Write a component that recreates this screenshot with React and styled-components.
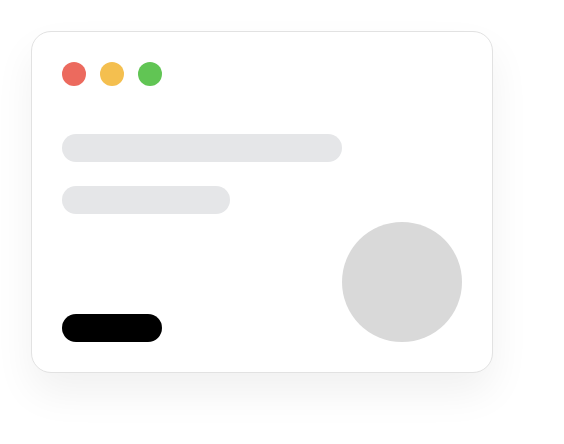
import React from "react";
import styled, { createGlobalStyle } from "styled-components";

const Global = createGlobalStyle`
  html, body { margin: 0; padding: 0; background: #ffffff; }
  body { font-family: "Inter", "Liberation Sans", sans-serif; }
`;

const Page = styled.div`
  padding: 31px 0 0 31px;
  width: 564px;
  height: 444px;
  box-sizing: border-box;
`;

const Card = styled.div`
  width: 462px;
  height: 342px;
  box-sizing: border-box;
  padding: 30px;
  border: 1px solid #e2e2e2;
  border-radius: 20px;
  background: #ffffff;
  box-shadow: 0 20px 40px rgba(0, 0, 0, 0.06);
  display: flex;
  flex-direction: column;
`;

const Dots = styled.div`
  display: flex;
  gap: 14px;
`;

const Dot = styled.span`
  width: 24px;
  height: 24px;
  border-radius: 50%;
  background: ${(p) => p.$color};
`;

const Lines = styled.div`
  margin-top: 48px;
  display: flex;
  flex-direction: column;
  gap: 24px;
`;

const Line = styled.div`
  width: ${(p) => p.$w}px;
  height: 28px;
  border-radius: 14px;
  background: #e5e6e8;
`;

const Bottom = styled.div`
  margin-top: auto;
  display: flex;
  justify-content: space-between;
  align-items: flex-end;
`;

const Pill = styled.div`
  width: 100px;
  height: 28px;
  border-radius: 14px;
  background: #000000;
`;

const Avatar = styled.div`
  width: 120px;
  height: 120px;
  border-radius: 50%;
  background: #d9d9d9;
`;

export default function App() {
  return (
    <>
      <Global />
      <Page>
        <Card>
          <Dots>
            <Dot $color="#ec6a5e" />
            <Dot $color="#f4bf4f" />
            <Dot $color="#61c554" />
          </Dots>
          <Lines>
            <Line $w={280} />
            <Line $w={168} />
          </Lines>
          <Bottom>
            <Pill />
            <Avatar />
          </Bottom>
        </Card>
      </Page>
    </>
  );
}
